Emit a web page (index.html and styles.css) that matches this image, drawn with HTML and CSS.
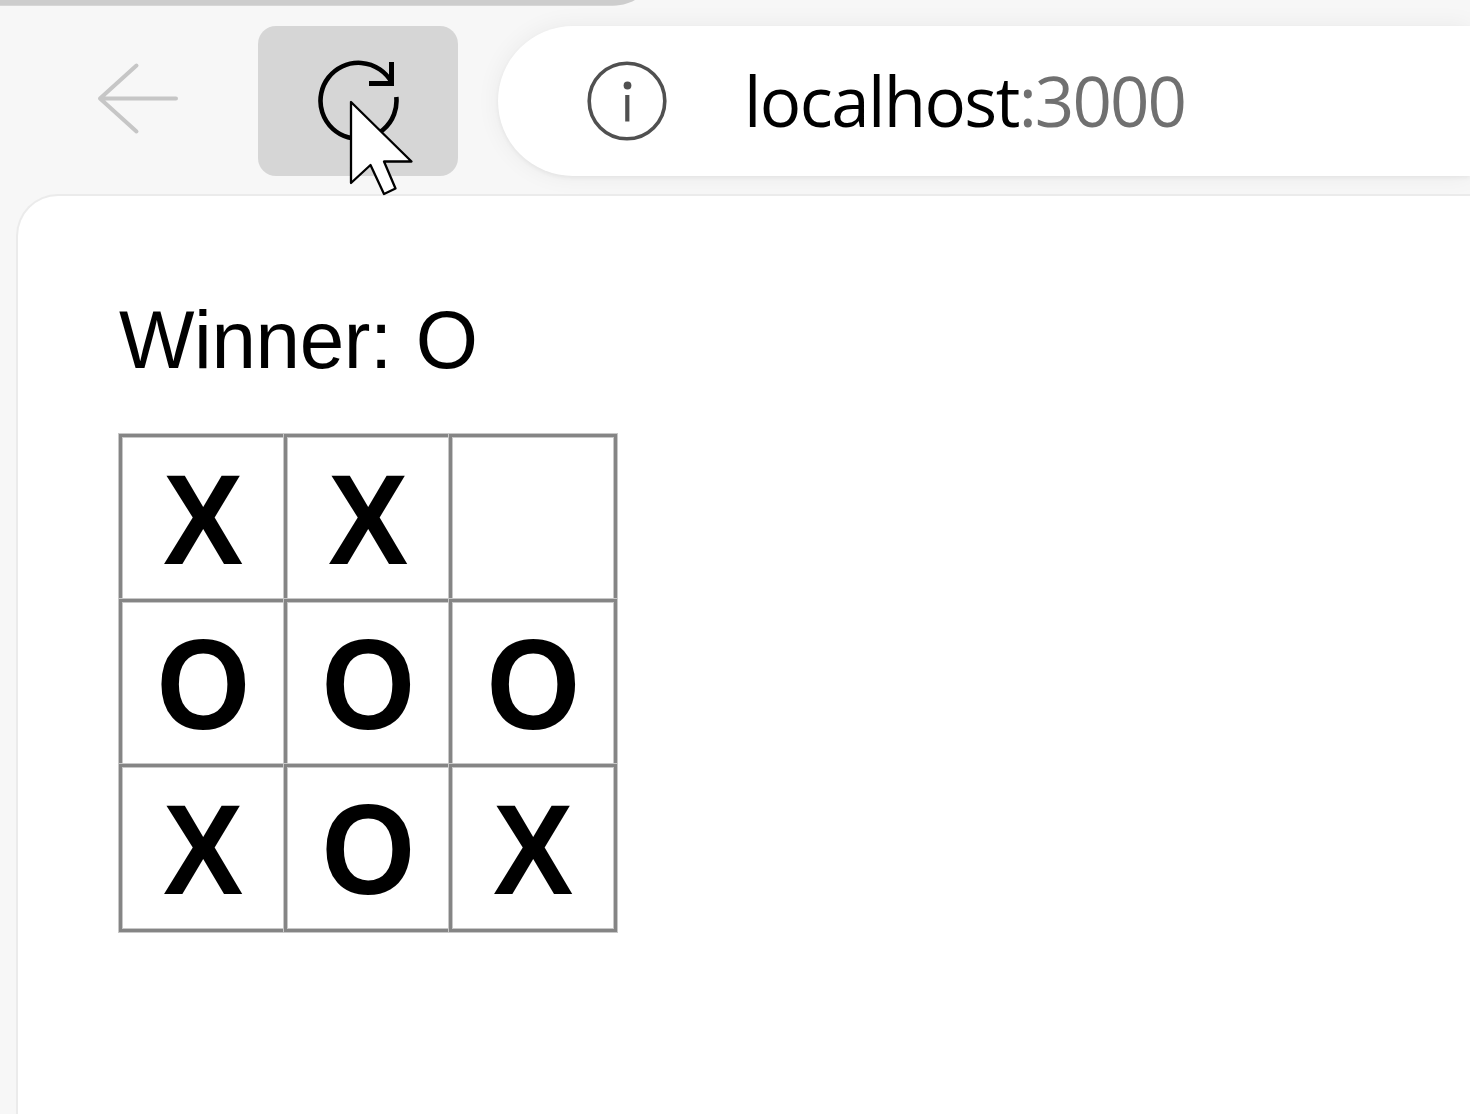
FILE: index.html
```html
<!DOCTYPE html>
<html lang="en">
<head>
<meta charset="utf-8">
<title>localhost:3000</title>
<link rel="stylesheet" href="styles.css">
</head>
<body>
<div class="browser">
  <svg class="tabs" viewBox="0 0 660 7" aria-hidden="true"><path d="M0 0H635C628 4 620 5.800 609 5.800H0Z" fill="#cdcdcd"/></svg>
  <header class="toolbar">
    <button class="back" aria-label="Back">
      <svg width="84" height="74" viewBox="0 0 84 74" fill="none" stroke="#c6c6c6" stroke-width="4" stroke-linecap="round" stroke-linejoin="round"><path d="M41.500 4.500L5 37.500L41.500 70.500M5 37.500H81"/></svg>
    </button>
    <button class="reload" aria-label="Reload">
      <svg width="84" height="84" viewBox="0 0 84 84" fill="none" stroke="#000" stroke-width="4.600"><path d="M79.300 38A38 38 0 1 1 74.500 23"/><path d="M52 24.500H74.500V3" stroke-width="5"/></svg>
      <svg class="cursor" width="66" height="98" viewBox="0 0 66 98"><path d="M3 4V85L22.500 67L36 96L47.500 90.500L36 63.500H63.500Z" fill="#fff" stroke="#000" stroke-width="2.300" stroke-linejoin="round"/></svg>
    </button>
    <div class="address">
      <svg width="80" height="80" viewBox="0 0 80 80"><circle cx="40" cy="40" r="37.800" fill="none" stroke="#505050" stroke-width="3.600"/><circle cx="40.500" cy="24.500" r="3.900" fill="#505050"/><path d="M40.300 34V60.500" stroke="#505050" stroke-width="4.200"/></svg>
      <span class="url"><span class="host">localhost</span><span class="port">:3000</span></span>
    </div>
  </header>
  <main class="page">
    <div class="status">Winner: O</div>
    <div class="board">
      <button class="square"><span>X</span></button>
      <button class="square"><span>X</span></button>
      <button class="square"></button>
      <button class="square"><span>O</span></button>
      <button class="square"><span>O</span></button>
      <button class="square"><span>O</span></button>
      <button class="square"><span>X</span></button>
      <button class="square"><span>O</span></button>
      <button class="square"><span>X</span></button>
    </div>
  </main>
</div>
</body>
</html>
```
FILE: styles.css
```css
* { box-sizing: border-box; }
body { margin: 0; background: #f7f7f7; }
button { padding: 0; border: 0; background: none; color: #000; }
svg { display: block; flex: none; }
.browser {
  display: grid;
  grid-template-rows: 7px 187px 1fr;
  height: 1114px;
  overflow: hidden;
}
.tabs { width: 660px; height: 7px; }
.toolbar {
  display: flex;
  align-items: flex-start;
  padding: 19px 0 0 95px;
}
.back {
  display: flex;
  align-items: flex-start;
  width: 84px;
  height: 150px;
  margin-right: 79px;
  padding-top: 35px;
}
.reload {
  position: relative;
  z-index: 1;
  display: flex;
  align-items: flex-start;
  width: 200px;
  height: 150px;
  margin-right: 40px;
  padding: 33px 0 0 59px;
  border-radius: 18px;
  background: #d6d6d6;
}
.cursor { position: absolute; left: 90px; top: 72px; }
.address {
  display: flex;
  flex: 1;
  align-items: center;
  gap: 77px;
  height: 150px;
  padding-left: 89px;
  border-radius: 75px 0 0 75px;
  background: #fff;
  box-shadow: 0 2px 4px rgba(0, 0, 0, .05), 0 0 24px rgba(0, 0, 0, .06);
}
.url {
  padding-bottom: 3px;
  font: 69px/80px "Open Sans", "Noto Sans", sans-serif;
  letter-spacing: -1.6px;
  white-space: nowrap;
}
.port { color: #707070; letter-spacing: -1.9px; }
.page {
  margin-left: 16px;
  padding: 98px 0 0 101px;
  border: solid #ebebeb;
  border-width: 2px 0 0 2px;
  border-radius: 42px 0 0 0;
  background: #fff;
}
.status {
  height: 92px;
  margin: 0 0 48px 0;
  font: 80px/92px "Liberation Sans", Arial, sans-serif;
  letter-spacing: -.4px;
  word-spacing: 2px;
  transform: scaleY(1.03);
}
.board {
  display: grid;
  grid-template-columns: repeat(3, 165px);
  grid-auto-rows: 165px;
}
.square {
  display: flex;
  align-items: center;
  justify-content: center;
  width: 168px;
  height: 168px;
  padding-top: 4px;
  border: 3px solid #858585;
  box-shadow: 0 0 0 1px #c8c8c8, inset 0 0 0 1px #c8c8c8;
  font: bold 128px/150px "Liberation Sans", Arial, sans-serif;
}
.square span { transform: translateX(.4px) scaleX(.94); }
```
